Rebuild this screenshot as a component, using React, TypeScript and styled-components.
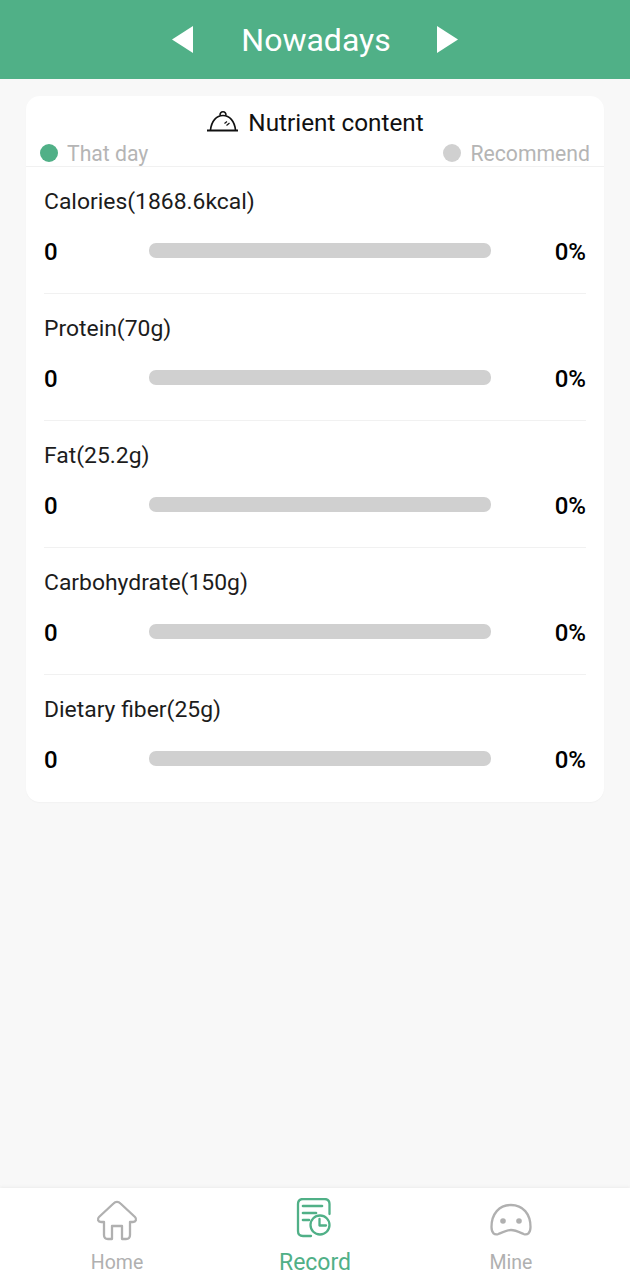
import React from "react";
import styled, { createGlobalStyle } from "styled-components";

const GlobalStyle = createGlobalStyle`
  html, body {
    margin: 0;
    padding: 0;
    background: #f8f8f8;
    font-family: Roboto, "Liberation Sans", sans-serif;
  }
  * { box-sizing: border-box; }
`;

const Screen = styled.div`
  width: 630px;
  height: 1280px;
  display: flex;
  flex-direction: column;
  background: #f8f8f8;
  overflow: hidden;
`;

const Header = styled.header`
  height: 79px;
  flex: none;
  background: #50b087;
  color: #fff;
  display: flex;
  align-items: center;
  justify-content: center;
`;

const Title = styled.h1`
  width: 244px;
  margin: 0;
  padding-left: 2px;
  font-size: 32px;
  font-weight: 400;
  text-align: center;
`;

const Arrow = styled.svg`
  width: 21px;
  height: 27px;
  fill: #fff;
  display: block;
`;

const Main = styled.main`
  flex: 1;
  padding: 17px 26px 0;
`;

const Card = styled.section`
  height: 706px;
  background: #fff;
  border-radius: 14px;
  box-shadow: 0 1px 1px #f2f2f2;
`;

const CardHead = styled.div`
  height: 71px;
  border-bottom: 1px solid #f1f1f1;
  padding-top: 11px;
`;

const CardTitle = styled.div`
  display: flex;
  align-items: center;
  justify-content: center;
  gap: 10px;
  height: 30px;
  font-size: 24.3px;
  color: #111;
`;

const Legend = styled.div`
  display: flex;
  justify-content: space-between;
  height: 28px;
  padding: 5px 14px 0;
`;

const LegendItem = styled.div`
  display: flex;
  align-items: center;
  gap: 9px;
  font-size: 21.2px;
  color: #b5b5b5;
`;

const Dot = styled.span<{ $color: string }>`
  width: 18px;
  height: 18px;
  margin-top: -2px;
  border-radius: 50%;
  background: ${(p) => p.$color};
`;

const Rows = styled.div`
  padding: 0 18px;
`;

const Row = styled.div`
  height: 127px;
  padding-top: 19px;
  border-bottom: 1px solid #f1f1f1;

  &:last-child {
    border-bottom: none;
  }
`;

const RowLabel = styled.div`
  height: 32px;
  line-height: 32px;
  font-size: 22.9px;
  color: #1c1c1c;
`;

const RowValues = styled.div`
  display: flex;
  align-items: center;
  height: 32px;
  margin-top: 18px;
  font-size: 24px;
  font-weight: 500;
  color: #000;
`;

const Amount = styled.span`
  width: 105px;
`;

const Track = styled.div`
  width: 342px;
  height: 15px;
  margin-top: -4px;
  border-radius: 7px;
  background: #d0d0d0;
`;

const Percent = styled.span`
  flex: 1;
  text-align: right;
`;

const TabBar = styled.nav`
  height: 92px;
  flex: none;
  background: #fff;
  box-shadow: 0 -1px 3px #ececec;
  display: grid;
  grid-template-columns: 234px 162px 230px;
`;

const Tab = styled.div<{ $active?: boolean }>`
  display: flex;
  flex-direction: column;
  align-items: center;
  height: 100%;
  padding-top: 10px;
  color: ${(p) => (p.$active ? "#50b087" : "#b0b0b0")};
  font-size: ${(p) => (p.$active ? "23px" : "19.5px")};
`;

const TabIcon = styled.svg`
  width: 44px;
  height: 44px;
  display: block;
  fill: none;
  stroke: currentColor;
  stroke-width: 2.3;
  stroke-linecap: round;
  stroke-linejoin: round;
`;

const TabLabel = styled.span`
  height: 28px;
  line-height: 28px;
  margin-top: 7px;
`;

const nutrients = [
  "Calories(1868.6kcal)",
  "Protein(70g)",
  "Fat(25.2g)",
  "Carbohydrate(150g)",
  "Dietary fiber(25g)",
];

const App = () => {
  return (
    <Screen>
      <GlobalStyle />
      <Header>
        <Arrow viewBox="0 0 21 27">
          <path d="M21 0V27L0 13.5Z" />
        </Arrow>
        <Title>Nowadays</Title>
        <Arrow viewBox="0 0 21 27">
          <path d="M0 0V27L21 13.5Z" />
        </Arrow>
      </Header>
      <Main>
        <Card>
          <CardHead>
            <CardTitle>
              <svg width="32" height="24" viewBox="-1 0 32 24" fill="none" stroke="#111" strokeWidth="1.6">
                <path d="M0 20.5H31" strokeWidth="2" />
                <path d="M3.5 20C4.5 11 9.5 5.500 16 5.500S27.5 11 28.500 20" />
                <path d="M13 5.500C13 0.500 19 0.500 19 5.500" />
                <path d="M17.5 13.5L20 11.5M19.5 15.5L22.5 13" strokeWidth="1.2" />
              </svg>
              Nutrient content
            </CardTitle>
            <Legend>
              <LegendItem>
                <Dot $color="#50b087" />
                That day
              </LegendItem>
              <LegendItem>
                <Dot $color="#d0d0d0" />
                Recommend
              </LegendItem>
            </Legend>
          </CardHead>
          <Rows>
            {nutrients.map((name) => (
              <Row key={name}>
                <RowLabel>{name}</RowLabel>
                <RowValues>
                  <Amount>0</Amount>
                  <Track />
                  <Percent>0%</Percent>
                </RowValues>
              </Row>
            ))}
          </Rows>
        </Card>
      </Main>
      <TabBar>
        <Tab>
          <TabIcon viewBox="0 0 44 44">
            <path d="M9 24H6C3 24 2 21 4 19L18.500 5.500C20.500 3.500 23.500 3.500 25.500 5.500L40 19C42 21 41 24 38 24H35V37C35 40 33.500 41 31 41H27V28H17V41H13C10.500 41 9 40 9 37Z" />
          </TabIcon>
          <TabLabel>Home</TabLabel>
        </Tab>
        <Tab $active>
          <TabIcon viewBox="0 0 44 44">
            <path d="M36.500 16V6C36.500 3 34.500 1 31.500 1H10C7 1 5 3 5 6V33C5 36 7 38 10 38H18" />
            <path d="M10 8H29" strokeWidth="2.6" />
            <path d="M10 15H23" strokeWidth="2.6" />
            <path d="M10 22H16" strokeWidth="2.6" />
            <circle cx="27" cy="27" r="9.500" />
            <path d="M26.500 21V27.500H33" />
          </TabIcon>
          <TabLabel>Record</TabLabel>
        </Tab>
        <Tab>
          <TabIcon viewBox="0 0 44 44">
            <path d="M22 7C10 7 2.500 16 2.500 29C2.500 35 5.500 37.500 9.500 36C14 34 18 32 22 32C26 32 30 34 34.500 36C38.500 37.500 41.500 35 41.500 29C41.500 16 34 7 22 7Z" />
            <circle cx="14" cy="23" r="2.800" fill="currentColor" stroke="none" />
            <circle cx="30" cy="23" r="2.800" fill="currentColor" stroke="none" />
          </TabIcon>
          <TabLabel>Mine</TabLabel>
        </Tab>
      </TabBar>
    </Screen>
  );
};

export default App;
